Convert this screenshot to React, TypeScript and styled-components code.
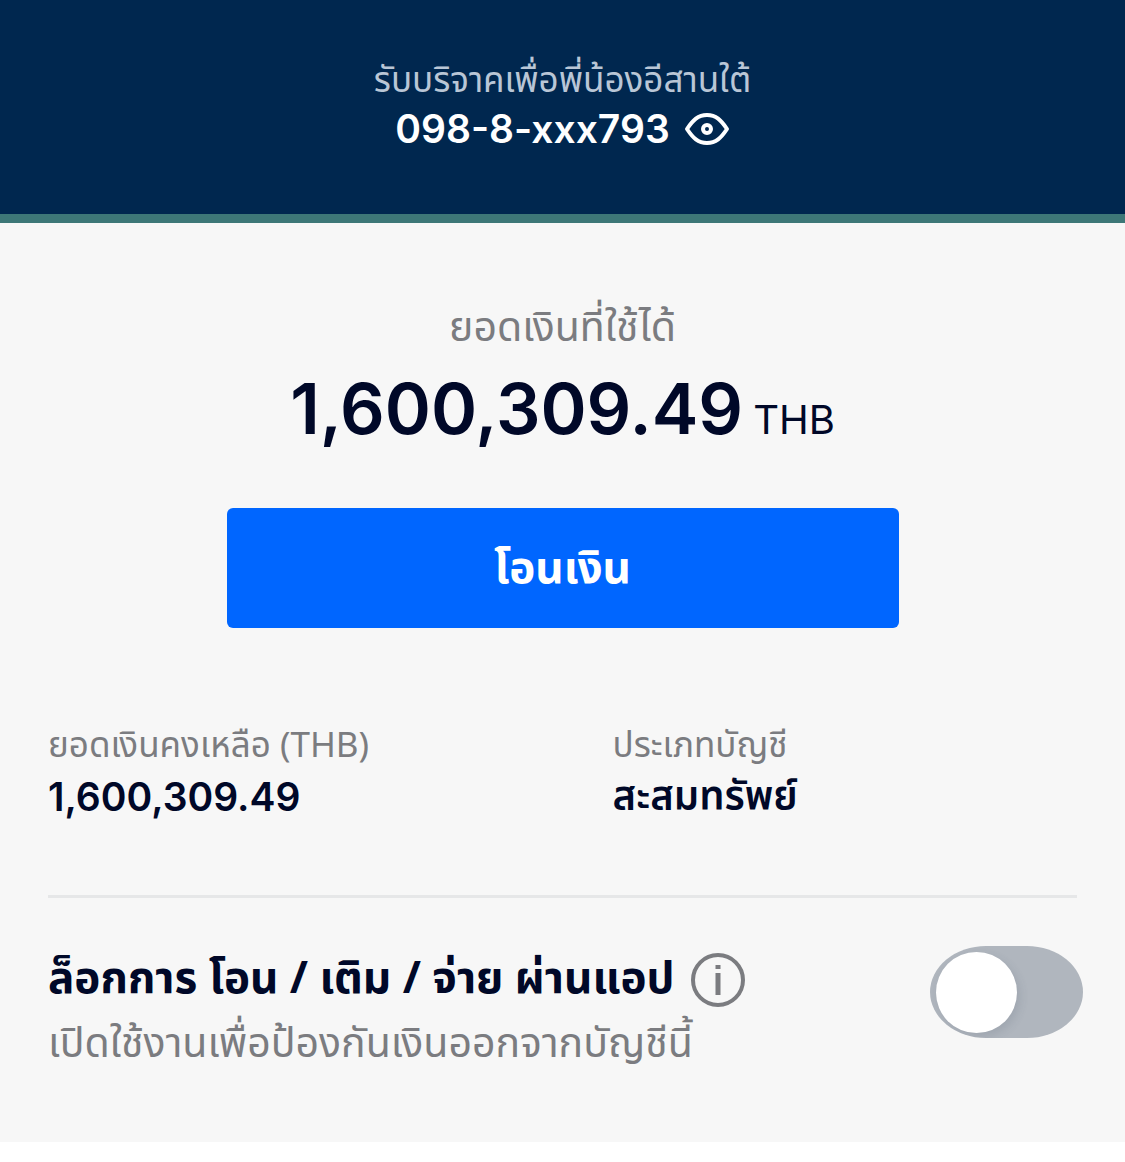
import React, { useState } from "react";
import styled, { createGlobalStyle } from "styled-components";

const thai = `"Noto Sans Thai", "Noto Sans", sans-serif`;
const numeral = `Inter, "Noto Sans Thai", sans-serif`;

const GlobalStyle = createGlobalStyle`
  *, *::before, *::after { box-sizing: border-box; }
  body {
    margin: 0;
    background: #ffffff;
    color: #000828;
    font-family: ${thai};
  }
  h1, h2, p, dl, dt, dd { margin: 0; }
`;

const Header = styled.header`
  display: flex;
  flex-direction: column;
  align-items: center;
  padding: 58px 48px 62px;
  background: #00274f;
  border-bottom: 9px solid #3d7777;
`;

const AccountName = styled.h1`
  font-size: 35px;
  font-weight: 400;
  line-height: 48px;
  color: #b9c6d6;
`;

const AccountNumber = styled.div`
  display: flex;
  align-items: center;
  gap: 14px;
  font-family: ${numeral};
  font-size: 39px;
  font-weight: 600;
  line-height: 46px;
  color: #ffffff;
`;

const IconButton = styled.button`
  display: flex;
  padding: 0;
  border: 0;
  background: none;
  color: inherit;
  cursor: pointer;
`;

const Main = styled.main`
  padding: 72px 48px 68px;
  background: #f7f7f7;
`;

const Balance = styled.section`
  display: flex;
  flex-direction: column;
  align-items: center;
`;

const BalanceLabel = styled.h2`
  font-size: 41px;
  font-weight: 400;
  line-height: 66px;
  color: #7b7c80;
`;

const BalanceAmount = styled.p`
  display: flex;
  align-items: baseline;
  gap: 10px;
  font-family: ${numeral};
  font-size: 70px;
  font-weight: 600;
  line-height: 96px;
`;

const Currency = styled.span`
  font-size: 40px;
  font-weight: 400;
  line-height: 48px;
`;

const TransferButton = styled.button`
  display: block;
  width: 672px;
  max-width: 100%;
  height: 120px;
  margin: 51px auto 0;
  padding: 4px 0 0;
  border: 0;
  border-radius: 6px;
  background: #0066ff;
  color: #ffffff;
  font-family: ${thai};
  font-size: 44px;
  font-weight: 700;
  line-height: 64px;
  cursor: pointer;
`;

const Details = styled.dl`
  display: grid;
  grid-template-columns: 1fr 1fr;
  column-gap: 100px;
  margin-top: 93px;
  padding-bottom: 72px;
  border-bottom: 3px solid #e6e7e8;
`;

const DetailLabel = styled.dt`
  font-size: 35px;
  line-height: 52px;
  color: #7b7c80;
`;

const DetailValue = styled.dd<{ $numeric?: boolean }>`
  font-family: ${(p) => (p.$numeric ? numeral : thai)};
  font-size: ${(p) => (p.$numeric ? 39 : 40)}px;
  font-weight: 600;
  line-height: ${(p) => (p.$numeric ? 48 : 50)}px;
`;

const LockRow = styled.section`
  display: flex;
  align-items: flex-start;
  justify-content: space-between;
  padding-top: 48px;
`;

const LockTitle = styled.div`
  display: flex;
  align-items: center;
  gap: 16px;
  font-size: 44px;
  font-weight: 700;
  line-height: 68px;
`;

const InfoButton = styled(IconButton)`
  color: #7b7c80;
`;

const LockHint = styled.p`
  font-size: 41px;
  line-height: 60px;
  color: #7b7c80;
`;

const Switch = styled.input`
  appearance: none;
  flex: none;
  width: 153px;
  height: 92px;
  margin: 0 -6px 0 0;
  padding: 6px;
  border-radius: 56px / 46px;
  overflow: hidden;
  background: #b0b6be;
  cursor: pointer;

  &::before {
    content: "";
    display: block;
    width: 81px;
    height: 81px;
    border-radius: 50%;
    background: #ffffff;
    box-shadow: 3px 4px 10px rgba(60, 70, 90, 0.14);
  }

  &:checked {
    background: #0066ff;
  }

  &:checked::before {
    margin-left: auto;
  }
`;

function EyeIcon() {
  return (
    <svg width="46" height="34" viewBox="0 0 46 34" fill="none" stroke="currentColor" strokeWidth="4" aria-hidden="true">
      <path d="M3 17C9 8 14 3 23 3s14 5 20 14c-6 9-11 14-20 14S9 26 3 17Z" strokeLinejoin="round" />
      <circle cx="23" cy="17" r="4" />
    </svg>
  );
}

function InfoIcon() {
  return (
    <svg width="54" height="54" viewBox="1 1 54 54" fill="none" stroke="currentColor" strokeWidth="4" aria-hidden="true">
      <circle cx="28" cy="28" r="25" />
      <path d="M28 21v22M28 13v4" strokeWidth="5" />
    </svg>
  );
}

export default function App() {
  const [locked, setLocked] = useState(false);
  return (
    <>
      <GlobalStyle />
      <Header>
        <AccountName>รับบริจาคเพื่อพี่น้องอีสานใต้</AccountName>
        <AccountNumber>
          <span>098-8-xxx793</span>
          <IconButton type="button" aria-label="แสดงเลขบัญชี">
            <EyeIcon />
          </IconButton>
        </AccountNumber>
      </Header>
      <Main>
        <Balance>
          <BalanceLabel>ยอดเงินที่ใช้ได้</BalanceLabel>
          <BalanceAmount>
            1,600,309.49 <Currency>THB</Currency>
          </BalanceAmount>
        </Balance>
        <TransferButton type="button">โอนเงิน</TransferButton>
        <Details>
          <div>
            <DetailLabel>ยอดเงินคงเหลือ (THB)</DetailLabel>
            <DetailValue $numeric>1,600,309.49</DetailValue>
          </div>
          <div>
            <DetailLabel>ประเภทบัญชี</DetailLabel>
            <DetailValue>สะสมทรัพย์</DetailValue>
          </div>
        </Details>
        <LockRow>
          <div>
            <LockTitle>
              <label htmlFor="lock">ล็อกการ โอน / เติม / จ่าย ผ่านแอป</label>
              <InfoButton type="button" aria-label="ข้อมูลเพิ่มเติม">
                <InfoIcon />
              </InfoButton>
            </LockTitle>
            <LockHint id="lock-hint">เปิดใช้งานเพื่อป้องกันเงินออกจากบัญชีนี้</LockHint>
          </div>
          <Switch
            id="lock"
            type="checkbox"
            role="switch"
            aria-describedby="lock-hint"
            checked={locked}
            onChange={(e) => setLocked(e.target.checked)}
          />
        </LockRow>
      </Main>
    </>
  );
}
